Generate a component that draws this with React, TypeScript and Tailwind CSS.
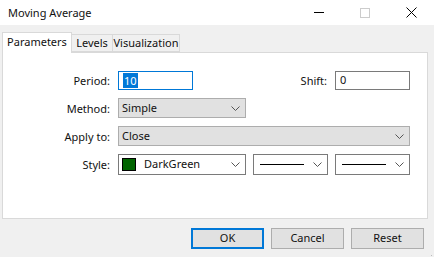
import React from 'react'

const font = { fontFamily: '"Noto Sans", "Liberation Sans", sans-serif' }

function Chevron() {
  return (
    <svg width="9" height="5" viewBox="0 0 9 5" className="shrink-0">
      <polyline points="0.5,0.5 4.5,4.5 8.5,0.5" fill="none" stroke="#555" strokeWidth="1" />
    </svg>
  )
}

function Label({ children }: { children: React.ReactNode }) {
  return <div className="w-[107px] shrink-0 text-right leading-none">{children}</div>
}

export default function App() {
  return (
    <div
      className="w-[434px] h-[257px] bg-[#f0f0f0] text-[11px] text-[#111] flex flex-col overflow-hidden"
      style={font}
    >
      {/* title bar */}
      <div className="h-[25px] bg-white flex items-center shrink-0">
        <div className="pl-[8px] flex-1 text-[11px] leading-none">Moving Average</div>
        <div className="flex items-center h-full">
          <div className="w-[46px] h-full flex items-center justify-center">
            <div className="w-[10px] h-px bg-black" />
          </div>
          <div className="w-[46px] h-full flex items-center justify-center">
            <div className="w-[10px] h-[10px] border border-[#cccccc]" />
          </div>
          <div className="w-[46px] h-full flex items-center justify-center">
            <svg width="11" height="11" viewBox="0 0 11 11">
              <path d="M0.5 0.5 L10.5 10.5 M10.5 0.5 L0.5 10.5" stroke="#000" strokeWidth="1" />
            </svg>
          </div>
        </div>
      </div>

      {/* tabs */}
      <div className="pl-[2px] pt-[6px] flex items-end h-[27px] shrink-0 relative z-10">
        <div className="w-[70px] h-[21px] bg-white border border-[#d9d9d9] border-b-0 flex items-center justify-center -mb-px pb-[2px]">
          Parameters
        </div>
        <div className="w-[41px] h-[18px] border border-[#d9d9d9] border-l-0 flex items-center justify-center">
          Levels
        </div>
        <div className="w-[67px] h-[18px] border border-[#d9d9d9] border-l-0 flex items-center justify-center">
          Visualization
        </div>
      </div>

      {/* panel */}
      <div className="mx-[2px] w-[426px] h-[167px] bg-white border border-[#d9d9d9] shrink-0 pt-[17px] pr-[17px] flex flex-col gap-[8px]">
        <div className="flex items-center h-[20px] gap-[8px]">
          <Label>Period:</Label>
          <div className="w-[75px] h-[19px] border border-[#0078d7] flex items-center pl-[4px]">
            <span className="bg-[#0078d7] text-white leading-[15px] px-[1px]">10</span>
          </div>
          <div className="flex-1 text-right leading-none">Shift:</div>
          <div className="w-[75px] h-[19px] border border-[#7a7a7a] flex items-center pl-[4px]">0</div>
        </div>
        <div className="flex items-center h-[20px] gap-[8px]">
          <Label>Method:</Label>
          <div className="w-[128px] h-[20px] bg-[#e1e1e1] border border-[#adadad] flex items-center pl-[3px] pr-[5px] justify-between">
            <span>Simple</span>
            <Chevron />
          </div>
        </div>
        <div className="flex items-center h-[20px] gap-[8px]">
          <Label>Apply to:</Label>
          <div className="w-[292px] h-[20px] bg-[#e1e1e1] border border-[#adadad] flex items-center pl-[3px] pr-[5px] justify-between">
            <span>Close</span>
            <Chevron />
          </div>
        </div>
        <div className="flex items-center h-[21px] gap-[8px]">
          <Label>Style:</Label>
          <div className="flex gap-[7px]">
            <div className="w-[128px] h-[21px] border border-[#7a7a7a] flex items-center pl-[3px] pr-[5px]">
              <div className="w-[14px] h-[13px] bg-[#006400] border border-black mr-[8px]" />
              <span className="flex-1">DarkGreen</span>
              <Chevron />
            </div>
            <div className="w-[75px] h-[21px] border border-[#7a7a7a] flex items-center pl-[6px] pr-[5px]">
              <div className="w-[44px] h-px bg-black" />
              <div className="flex-1" />
              <Chevron />
            </div>
            <div className="w-[75px] h-[21px] border border-[#7a7a7a] flex items-center pl-[6px] pr-[5px]">
              <div className="w-[44px] h-px bg-black" />
              <div className="flex-1" />
              <Chevron />
            </div>
          </div>
        </div>
      </div>

      {/* buttons */}
      <div className="flex justify-end gap-[7px] pr-[10px] pt-[9px] relative">
        <div className="w-[73px] h-[21px] bg-[#e1e1e1] border-2 border-[#0078d7] flex items-center justify-center">OK</div>
        <div className="w-[73px] h-[21px] bg-[#e1e1e1] border border-[#adadad] flex items-center justify-center">Cancel</div>
        <div className="w-[73px] h-[21px] bg-[#e1e1e1] border border-[#adadad] flex items-center justify-center">Reset</div>
        <svg width="8" height="8" viewBox="0 0 8 8" className="absolute right-[1px] bottom-[-14px]">
          <rect x="6" y="0" width="1" height="1" fill="#bcbcbc" />
          <rect x="3" y="3" width="1" height="1" fill="#bcbcbc" />
          <rect x="6" y="3" width="1" height="1" fill="#bcbcbc" />
          <rect x="0" y="6" width="1" height="1" fill="#bcbcbc" />
          <rect x="3" y="6" width="1" height="1" fill="#bcbcbc" />
          <rect x="6" y="6" width="1" height="1" fill="#bcbcbc" />
        </svg>
      </div>
    </div>
  )
}
